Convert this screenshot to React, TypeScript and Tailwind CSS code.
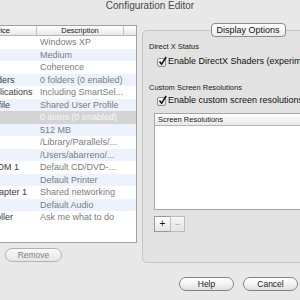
const rows: [string, string][] = [
  ["General", "Windows XP"],
  ["Priority", "Medium"],
  ["View", "Coherence"],
  ["Shared Folders", "0 folders (0 enabled)"],
  ["Shared Applications", "Including SmartSel..."],
  ["Shared Profile", "Shared User Profile"],
  ["Devices", "0 items (0 enabled)"],
  ["Memory", "512 MB"],
  ["Floppy", "/Library/Parallels/..."],
  ["Hard Disk 1", "/Users/abarreno/..."],
  ["CD/DVD-ROM 1", "Default CD/DVD-..."],
  ["Printer", "Default Printer"],
  ["Network Adapter 1", "Shared networking"],
  ["Sound", "Default Audio"],
  ["USB Controller", "Ask me what to do"],
];

const Check = () => (
  <span className="flex h-[9px] w-[9px] shrink-0 items-center justify-center rounded-[2px] border border-[#8f8f8f] bg-gradient-to-b from-white to-[#e4e4e4]">
    <svg width="9" height="9" viewBox="0 0 9 9" className="-mt-[2px] ml-[1px] overflow-visible">
      <path d="M1.5 4.5 L3.6 7.2 L8.2 0" fill="none" stroke="#111" strokeWidth="1.5" />
    </svg>
  </span>
);

const PillButton = ({ label, disabled, width }: { label: string; disabled?: boolean; width: string }) => (
  <div
    className={`flex h-[14px] items-center justify-center rounded-full border bg-gradient-to-b text-[8.5px] leading-[12px] ${width} ${
      disabled
        ? "border-[#b3b3b3] from-[#fafafa] to-[#e6e6e6] text-[#7d7d7d]"
        : "border-[#858585] from-white via-[#f3f3f3] to-[#dedede] text-[#1e1e1e]"
    }`}
  >
    {label}
  </div>
);

export default function App() {
  return (
    <div className="flex h-[300px] w-[300px] flex-col overflow-hidden bg-[#e8e8e8] font-['Liberation_Sans',Arial,sans-serif]">
      <div className="h-[12px] shrink-0 text-center text-[10px] leading-[12px] text-[#484848]">Configuration Editor</div>

      <div className="flex shrink-0 items-start">
        {/* device list */}
        <div className="mt-[13px] flex shrink-0 flex-col">
          <div className="ml-[-70px] flex h-[218px] w-[207px] flex-col overflow-hidden border border-[#a1a1a1] bg-white">
            <div className="flex h-[10px] shrink-0 border-b border-[#b4b4b4] bg-gradient-to-b from-white to-[#e8e8e8] text-[7.5px] leading-[9px] text-[#1a1a1a]">
              <div className="flex w-[106px] justify-end border-r border-[#c4c4c4] pr-[26px]">Device</div>
              <div className="w-[87px] border-r border-[#c4c4c4] text-center">Description</div>
              <div className="flex-1" />
            </div>
            {rows.map(([name, desc], i) => {
              const selected = i === 6;
              const bg = selected ? "bg-[#d4d4d4]" : i % 2 === 1 ? "bg-[#edf3fd]" : "bg-white";
              return (
                <div key={i} className={`flex h-[12.5px] shrink-0 text-[9px] leading-[12.5px] ${bg}`}>
                  <div className={`w-[106px] overflow-hidden whitespace-nowrap pl-[22px] ${selected ? "text-[#f7f7f7]" : "text-[#3d3d3d]"}`}>{name}</div>
                  <div className={`flex-1 overflow-hidden whitespace-nowrap pl-[3px] ${selected ? "text-[#f7f7f7]" : "text-[#7c7c7c]"}`}>{desc}</div>
                </div>
              );
            })}
          </div>
          <div className="mt-[5px] ml-[5px]">
            <PillButton label="Remove" disabled width="w-[57px]" />
          </div>
        </div>

        {/* group box */}
        <div className="mt-[18px] ml-[5px] flex h-[233px] w-[212px] shrink-0 flex-col rounded-[5px] border border-[#c3c3c3] bg-[#e2e2e2]">
          <div className="-mt-[8px] flex h-[14px] w-[75px] items-center justify-center self-center rounded-[4px] border border-[#8c8c8c] bg-gradient-to-b from-white to-[#ebebeb] text-[9px] leading-[12px] text-[#111]">
            Display Options
          </div>

          <div className="mt-[5px] pl-[6px] text-[7.5px] leading-[10px] text-[#1a1a1a]">Direct X Status</div>
          <div className="mt-[4px] flex h-[12px] items-center gap-[2px] whitespace-nowrap pl-[14px] text-[9px] text-[#111]">
            <Check />
            <span>Enable DirectX Shaders (experimental)</span>
          </div>

          <div className="mt-[15px] pl-[6px] text-[7.5px] leading-[10px] text-[#1a1a1a]">Custom Screen Resolutions</div>
          <div className="mt-[2px] flex h-[12px] items-center gap-[2px] whitespace-nowrap pl-[14px] text-[9px] text-[#111]">
            <Check />
            <span>Enable custom screen resolutions</span>
          </div>

          <div className="mt-[6px] ml-[11px] flex h-[97px] w-[190px] flex-col border border-[#a6a6a6] bg-white">
            <div className="h-[12px] shrink-0 border-b border-[#b6b6b6] bg-gradient-to-b from-white to-[#e9e9e9] pl-[3px] text-[7.5px] leading-[11px] text-[#1a1a1a]">
              Screen Resolutions
            </div>
          </div>

          <div className="mt-[6px] ml-[11px] flex">
            <div className="flex h-[16px] w-[17px] items-center justify-center border border-[#9a9a9a] bg-gradient-to-b from-white to-[#e6e6e6] text-[10px] leading-none text-[#111]">+</div>
            <div className="-ml-px flex h-[16px] w-[15px] items-center justify-center border border-[#bdbdbd] bg-gradient-to-b from-[#f6f6f6] to-[#e4e4e4] text-[9px] leading-none text-[#a0a0a0]">−</div>
          </div>
        </div>
      </div>

      <div className="mt-[14px] flex justify-end gap-[9px] pr-[2px]">
        <PillButton label="Help" width="w-[55px]" />
        <PillButton label="Cancel" width="w-[55px]" />
      </div>
    </div>
  );
}
